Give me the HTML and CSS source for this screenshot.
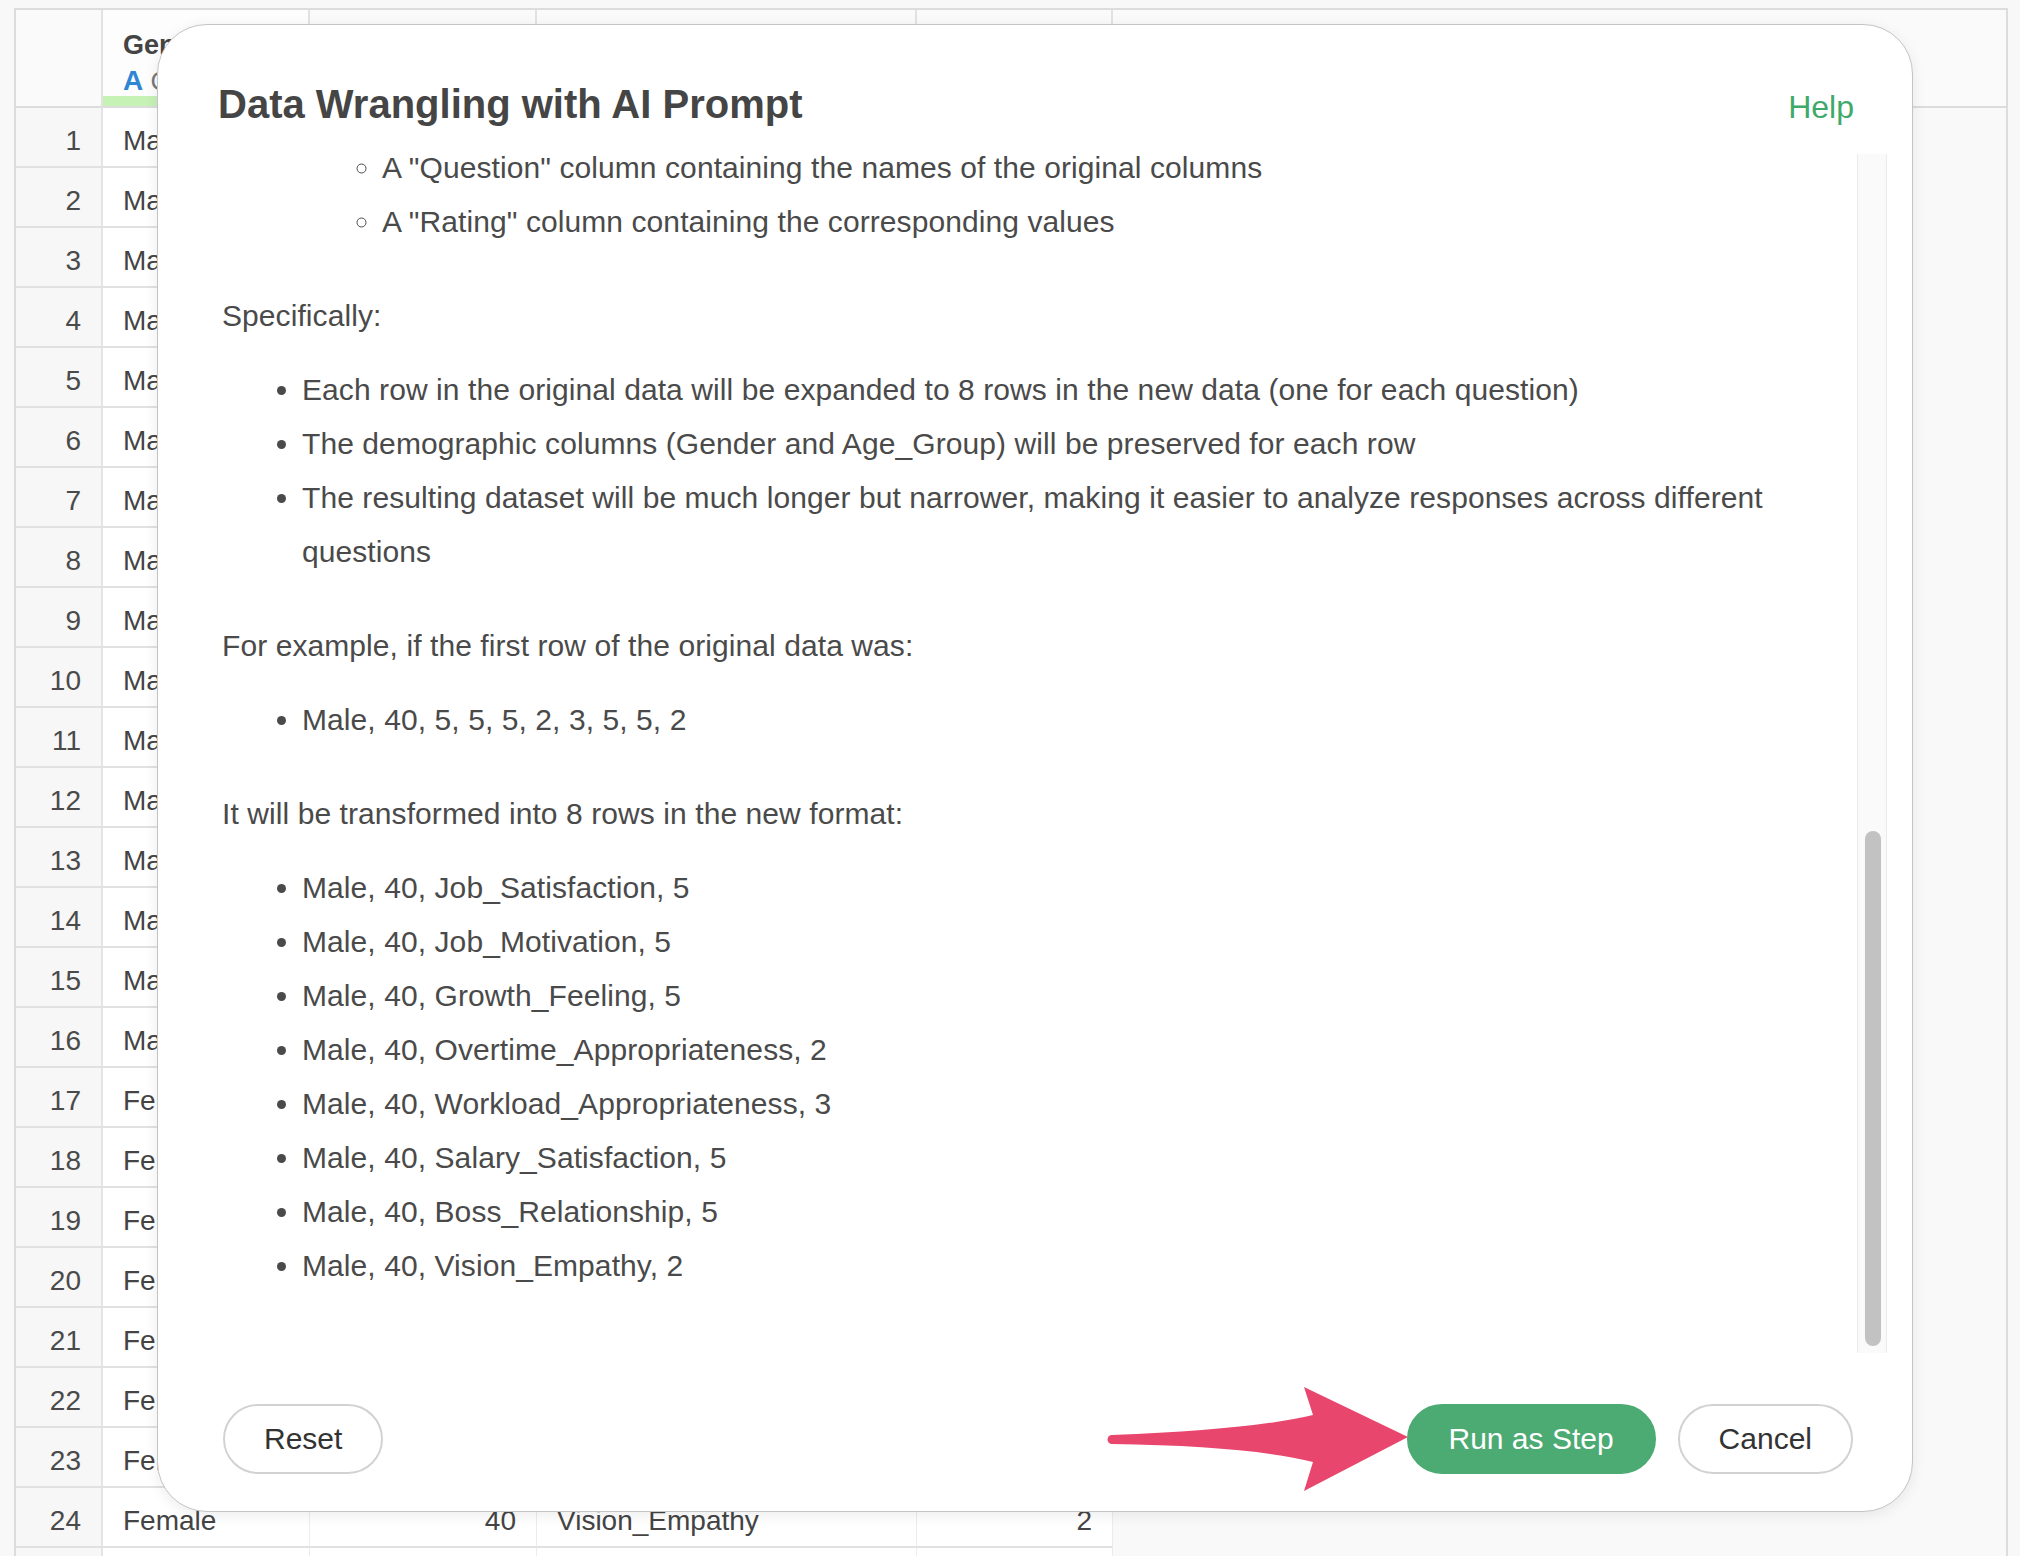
FILE: index.html
```html
<!DOCTYPE html>
<html lang="en">

<head>
    <meta charset="UTF-8">
    <meta name="viewport" content="width=device-width, initial-scale=1.0">
    <title>Data Wrangling with AI Prompt</title>
    <link rel="stylesheet" href="styles.css">
</head>

<body>
    <!-- data grid behind the dialog -->
    <div class="sheet">
        <div class="sheet-head">
            <div class="head-cell"></div>
            <div class="head-cell is-selected">
                <div class="col-name">Gender</div>
                <div class="col-type"><span class="type-icon">A</span> Character</div>
            </div>
            <div class="head-cell">
                <div class="col-name">Age_Group</div>
                <div class="col-type"><span class="type-icon">#</span> Integer</div>
            </div>
            <div class="head-cell">
                <div class="col-name">Question</div>
                <div class="col-type"><span class="type-icon">A</span> Character</div>
            </div>
            <div class="head-cell">
                <div class="col-name">Rating</div>
                <div class="col-type"><span class="type-icon">#</span> Integer</div>
            </div>
            <div class="head-cell filler"></div>
        </div>

        <div class="sheet-row"><div class="cell num">1</div><div class="cell">Male</div><div class="cell right">40</div><div class="cell">Job_Satisfaction</div><div class="cell right">5</div></div>
        <div class="sheet-row"><div class="cell num">2</div><div class="cell">Male</div><div class="cell right">40</div><div class="cell">Job_Motivation</div><div class="cell right">5</div></div>
        <div class="sheet-row"><div class="cell num">3</div><div class="cell">Male</div><div class="cell right">40</div><div class="cell">Growth_Feeling</div><div class="cell right">5</div></div>
        <div class="sheet-row"><div class="cell num">4</div><div class="cell">Male</div><div class="cell right">40</div><div class="cell">Overtime_Appropriateness</div><div class="cell right">2</div></div>
        <div class="sheet-row"><div class="cell num">5</div><div class="cell">Male</div><div class="cell right">40</div><div class="cell">Workload_Appropriateness</div><div class="cell right">3</div></div>
        <div class="sheet-row"><div class="cell num">6</div><div class="cell">Male</div><div class="cell right">40</div><div class="cell">Salary_Satisfaction</div><div class="cell right">5</div></div>
        <div class="sheet-row"><div class="cell num">7</div><div class="cell">Male</div><div class="cell right">40</div><div class="cell">Boss_Relationship</div><div class="cell right">5</div></div>
        <div class="sheet-row"><div class="cell num">8</div><div class="cell">Male</div><div class="cell right">40</div><div class="cell">Vision_Empathy</div><div class="cell right">2</div></div>
        <div class="sheet-row"><div class="cell num">9</div><div class="cell">Male</div><div class="cell right">30</div><div class="cell">Job_Satisfaction</div><div class="cell right">4</div></div>
        <div class="sheet-row"><div class="cell num">10</div><div class="cell">Male</div><div class="cell right">30</div><div class="cell">Job_Motivation</div><div class="cell right">3</div></div>
        <div class="sheet-row"><div class="cell num">11</div><div class="cell">Male</div><div class="cell right">30</div><div class="cell">Growth_Feeling</div><div class="cell right">4</div></div>
        <div class="sheet-row"><div class="cell num">12</div><div class="cell">Male</div><div class="cell right">30</div><div class="cell">Overtime_Appropriateness</div><div class="cell right">3</div></div>
        <div class="sheet-row"><div class="cell num">13</div><div class="cell">Male</div><div class="cell right">30</div><div class="cell">Workload_Appropriateness</div><div class="cell right">2</div></div>
        <div class="sheet-row"><div class="cell num">14</div><div class="cell">Male</div><div class="cell right">30</div><div class="cell">Salary_Satisfaction</div><div class="cell right">3</div></div>
        <div class="sheet-row"><div class="cell num">15</div><div class="cell">Male</div><div class="cell right">30</div><div class="cell">Boss_Relationship</div><div class="cell right">4</div></div>
        <div class="sheet-row"><div class="cell num">16</div><div class="cell">Male</div><div class="cell right">30</div><div class="cell">Vision_Empathy</div><div class="cell right">3</div></div>
        <div class="sheet-row"><div class="cell num">17</div><div class="cell">Female</div><div class="cell right">40</div><div class="cell">Job_Satisfaction</div><div class="cell right">4</div></div>
        <div class="sheet-row"><div class="cell num">18</div><div class="cell">Female</div><div class="cell right">40</div><div class="cell">Job_Motivation</div><div class="cell right">4</div></div>
        <div class="sheet-row"><div class="cell num">19</div><div class="cell">Female</div><div class="cell right">40</div><div class="cell">Growth_Feeling</div><div class="cell right">3</div></div>
        <div class="sheet-row"><div class="cell num">20</div><div class="cell">Female</div><div class="cell right">40</div><div class="cell">Overtime_Appropriateness</div><div class="cell right">2</div></div>
        <div class="sheet-row"><div class="cell num">21</div><div class="cell">Female</div><div class="cell right">40</div><div class="cell">Workload_Appropriateness</div><div class="cell right">2</div></div>
        <div class="sheet-row"><div class="cell num">22</div><div class="cell">Female</div><div class="cell right">40</div><div class="cell">Salary_Satisfaction</div><div class="cell right">3</div></div>
        <div class="sheet-row"><div class="cell num">23</div><div class="cell">Female</div><div class="cell right">40</div><div class="cell">Boss_Relationship</div><div class="cell right">4</div></div>
        <div class="sheet-row"><div class="cell num">24</div><div class="cell">Female</div><div class="cell right">40</div><div class="cell">Vision_Empathy</div><div class="cell right">2</div></div>
        <div class="sheet-row"><div class="cell num"></div><div class="cell"></div><div class="cell"></div><div class="cell"></div><div class="cell"></div></div>
    </div>

    <!-- modal -->
    <div class="dialog">
        <div class="dialog-head">
            <h1 class="dialog-title">Data Wrangling with AI Prompt</h1>
            <a class="help-link" href="#">Help</a>
        </div>

        <div class="dialog-body">
            <div class="prompt-text">
                <ul class="sub-list">
                    <li>A "Question" column containing the names of the original columns</li>
                    <li>A "Rating" column containing the corresponding values</li>
                </ul>

                <p>Specifically:</p>
                <ul>
                    <li>Each row in the original data will be expanded to 8 rows in the new data (one for each question)</li>
                    <li>The demographic columns (Gender and Age_Group) will be preserved for each row</li>
                    <li>The resulting dataset will be much longer but narrower, making it easier to analyze responses across different questions</li>
                </ul>

                <p>For example, if the first row of the original data was:</p>
                <ul>
                    <li>Male, 40, 5, 5, 5, 2, 3, 5, 5, 2</li>
                </ul>

                <p>It will be transformed into 8 rows in the new format:</p>
                <ul>
                    <li>Male, 40, Job_Satisfaction, 5</li>
                    <li>Male, 40, Job_Motivation, 5</li>
                    <li>Male, 40, Growth_Feeling, 5</li>
                    <li>Male, 40, Overtime_Appropriateness, 2</li>
                    <li>Male, 40, Workload_Appropriateness, 3</li>
                    <li>Male, 40, Salary_Satisfaction, 5</li>
                    <li>Male, 40, Boss_Relationship, 5</li>
                    <li>Male, 40, Vision_Empathy, 2</li>
                </ul>
            </div>
            <div class="scroll-track">
                <div class="scroll-thumb"></div>
            </div>
        </div>

        <div class="dialog-foot">
            <button class="btn btn-reset">Reset</button>
            <button class="btn btn-run">Run as Step</button>
            <button class="btn">Cancel</button>
        </div>
    </div>

    <!-- callout arrow pointing at the run button -->
    <svg class="annotation" width="320" height="120" viewBox="0 0 320 120">
        <path d="M12 55 Q150 50 213 35 L204 7 L308 57 L204 111 L213 82 Q150 66 12 64 A4.5 4.5 0 0 1 12 55 Z" fill="#e9466e" />
    </svg>
</body>

</html>
```

FILE: styles.css
```css
* {
    box-sizing: border-box;
}

html,
body {
    margin: 0;
    height: 100%;
    overflow: hidden;
}

body {
    background: #f8f8f8;
    font-family: "Liberation Sans", Arial, sans-serif;
    color: #444;
}

/* background grid */
.sheet {
    margin: 8px 12px 0 14px;
    border: 2px solid #dcdcdc;
    border-bottom: none;
    background: #f9f9f9;
    min-height: 1548px;
}

.sheet-head,
.sheet-row {
    display: grid;
    grid-template-columns: 87px 207px 227px 380px 196px 1fr;
}

.sheet-head {
    height: 98px;
}

.head-cell {
    background: #fafafa;
    border-right: 2px solid #e2e2e2;
    border-bottom: 2px solid #dcdcdc;
    padding: 17px 20px 0;
    white-space: nowrap;
    overflow: hidden;
}

.head-cell.filler {
    border-right: none;
}

.head-cell.is-selected {
    background: #fdfdfd;
    box-shadow: inset 0 -10px 0 #c6f2b6;
}

.col-name {
    font-size: 27px;
    line-height: 36px;
    font-weight: bold;
}

.col-type {
    font-size: 26px;
    line-height: 36px;
    color: #777;
}

.type-icon {
    color: #2f86d3;
    font-weight: bold;
    font-size: 28px;
}

.cell {
    height: 60px;
    display: flex;
    align-items: center;
    padding: 7px 20px 0;
    background: #fff;
    border-bottom: 2px solid #e1e1e1;
    border-right: 1px solid #ececec;
    font-size: 28px;
    white-space: nowrap;
    overflow: hidden;
}

.cell.num {
    justify-content: flex-end;
    background: #f7f7f7;
    border-right: 2px solid #e4e4e4;
    color: #4a4a4a;
}

.cell.right {
    justify-content: flex-end;
}

/* dialog */
.dialog {
    position: absolute;
    left: 157px;
    top: 24px;
    width: 1756px;
    height: 1488px;
    display: flex;
    flex-direction: column;
    background: #fff;
    border: 1px solid #c4c4c4;
    border-radius: 50px;
    box-shadow: 0 3px 14px rgba(0, 0, 0, 0.08);
}

.dialog-head {
    display: flex;
    justify-content: space-between;
    align-items: baseline;
    padding: 59px 58px 0 60px;
}

.dialog-title {
    margin: 0;
    font-size: 40px;
    line-height: 40px;
    font-weight: bold;
    color: #454545;
}

.help-link {
    font-size: 32px;
    line-height: 40px;
    color: #3fa96b;
    text-decoration: none;
}

/* text area starts 13px above the scroll track, so the first line sits as in the scrolled view */
.dialog-body {
    display: flex;
    height: 1212px;
    margin-top: 14px;
    padding-left: 64px;
}

.prompt-text {
    flex: 1;
    overflow: hidden;
    padding-right: 24px;
    font-size: 30px;
    line-height: 54px;
    letter-spacing: 0.08px;
    color: #4a4a4a;
}

.prompt-text p {
    margin: 40px 0 20px;
}

.prompt-text ul {
    margin: 20px 0;
    padding-left: 80px;
}

.prompt-text ul.sub-list {
    margin-top: 0;
    padding-left: 160px;
    list-style-type: circle;
}

.scroll-track {
    width: 30px;
    margin: 13px 25px 0 0;
    display: flex;
    flex-direction: column;
    justify-content: flex-end;
    padding: 0 5px 7px 7px;
    background: #fafafa;
    border-left: 1px solid #ebebeb;
    border-right: 1px solid #ebebeb;
}

.scroll-thumb {
    height: 515px;
    border-radius: 8px;
    background: #c2c2c2;
}

.dialog-foot {
    flex: 1;
    display: flex;
    align-items: flex-start;
    gap: 22px;
    padding: 51px 59px 0 65px;
}

.btn {
    height: 70px;
    padding: 0 39px;
    border-radius: 35px;
    border: 2px solid #d2d2d2;
    background: #fff;
    font-family: "Liberation Sans", Arial, sans-serif;
    font-size: 30px;
    color: #333;
    cursor: pointer;
    white-space: nowrap;
}

.btn-reset {
    margin-right: auto;
}

.btn-run {
    padding: 0 40px;
    background: #4caa73;
    border-color: #4caa73;
    color: #fff;
}

.annotation {
    position: absolute;
    left: 1100px;
    top: 1380px;
}
```
